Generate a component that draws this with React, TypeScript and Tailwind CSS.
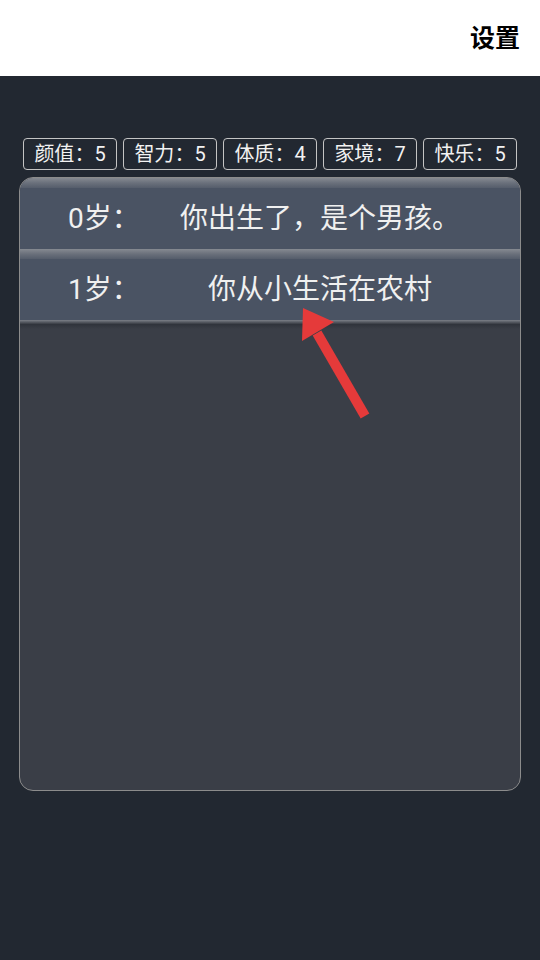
const stats = [
  { name: "颜值", value: 5 },
  { name: "智力", value: 5 },
  { name: "体质", value: 4 },
  { name: "家境", value: 7 },
  { name: "快乐", value: 5 },
];

const events = [
  { age: 0, text: "你出生了，是个男孩。" },
  { age: 1, text: "你从小生活在农村" },
];

const App = () => {
  return (
    <div className="relative w-[540px] h-[960px] bg-[#222831] font-['Roboto','Noto_Sans_CJK_SC',sans-serif] overflow-hidden">
      {/* header */}
      <header className="h-[76px] bg-white flex items-center justify-end pr-[20px]">
        <span className="text-[25px] font-bold text-black leading-none">设置</span>
      </header>

      {/* stats */}
      <div className="mt-[62px] px-[23px] flex justify-between">
        {stats.map((s) => (
          <div
            key={s.name}
            className="w-[94px] h-[32px] border border-[#c4c4c4] rounded-[4px] flex items-center justify-center text-[20px] leading-none text-[#f2f2f2] whitespace-nowrap"
          >
            {s.name}：{s.value}
          </div>
        ))}
      </div>

      {/* life log */}
      <div className="mt-[7px] mx-[19px] h-[614px] border border-[#8c8c8c] rounded-[14px] bg-[#3a3e47] overflow-hidden">
        {events.map((e) => (
          <div key={e.age}>
            <div className="h-[10px] bg-gradient-to-b from-[#868a91] via-[#6a707b] to-[#555d6b]" />
            <div className="h-[61px] bg-[#4a5363] flex items-center text-[28px] leading-none text-[#f0f0f0]">
              <span className="w-[100px] shrink-0 pl-[48px] whitespace-nowrap">{e.age}岁：</span>
              <span className="flex-1 text-center whitespace-nowrap">{e.text}</span>
            </div>
          </div>
        ))}
        <div className="h-[9px] bg-gradient-to-b from-[#7c8088] via-[#30343c] to-[#3a3e47]" />
      </div>

      {/* arrow pointing at the latest entry */}
      <svg className="absolute left-0 top-0 pointer-events-none" width="540" height="960">
        <line x1="365" y1="416" x2="317" y2="333" stroke="#e53a3a" strokeWidth="10" />
        <polygon points="303,308 302,341 334,322" fill="#e53a3a" />
      </svg>
    </div>
  );
};

export default App;
